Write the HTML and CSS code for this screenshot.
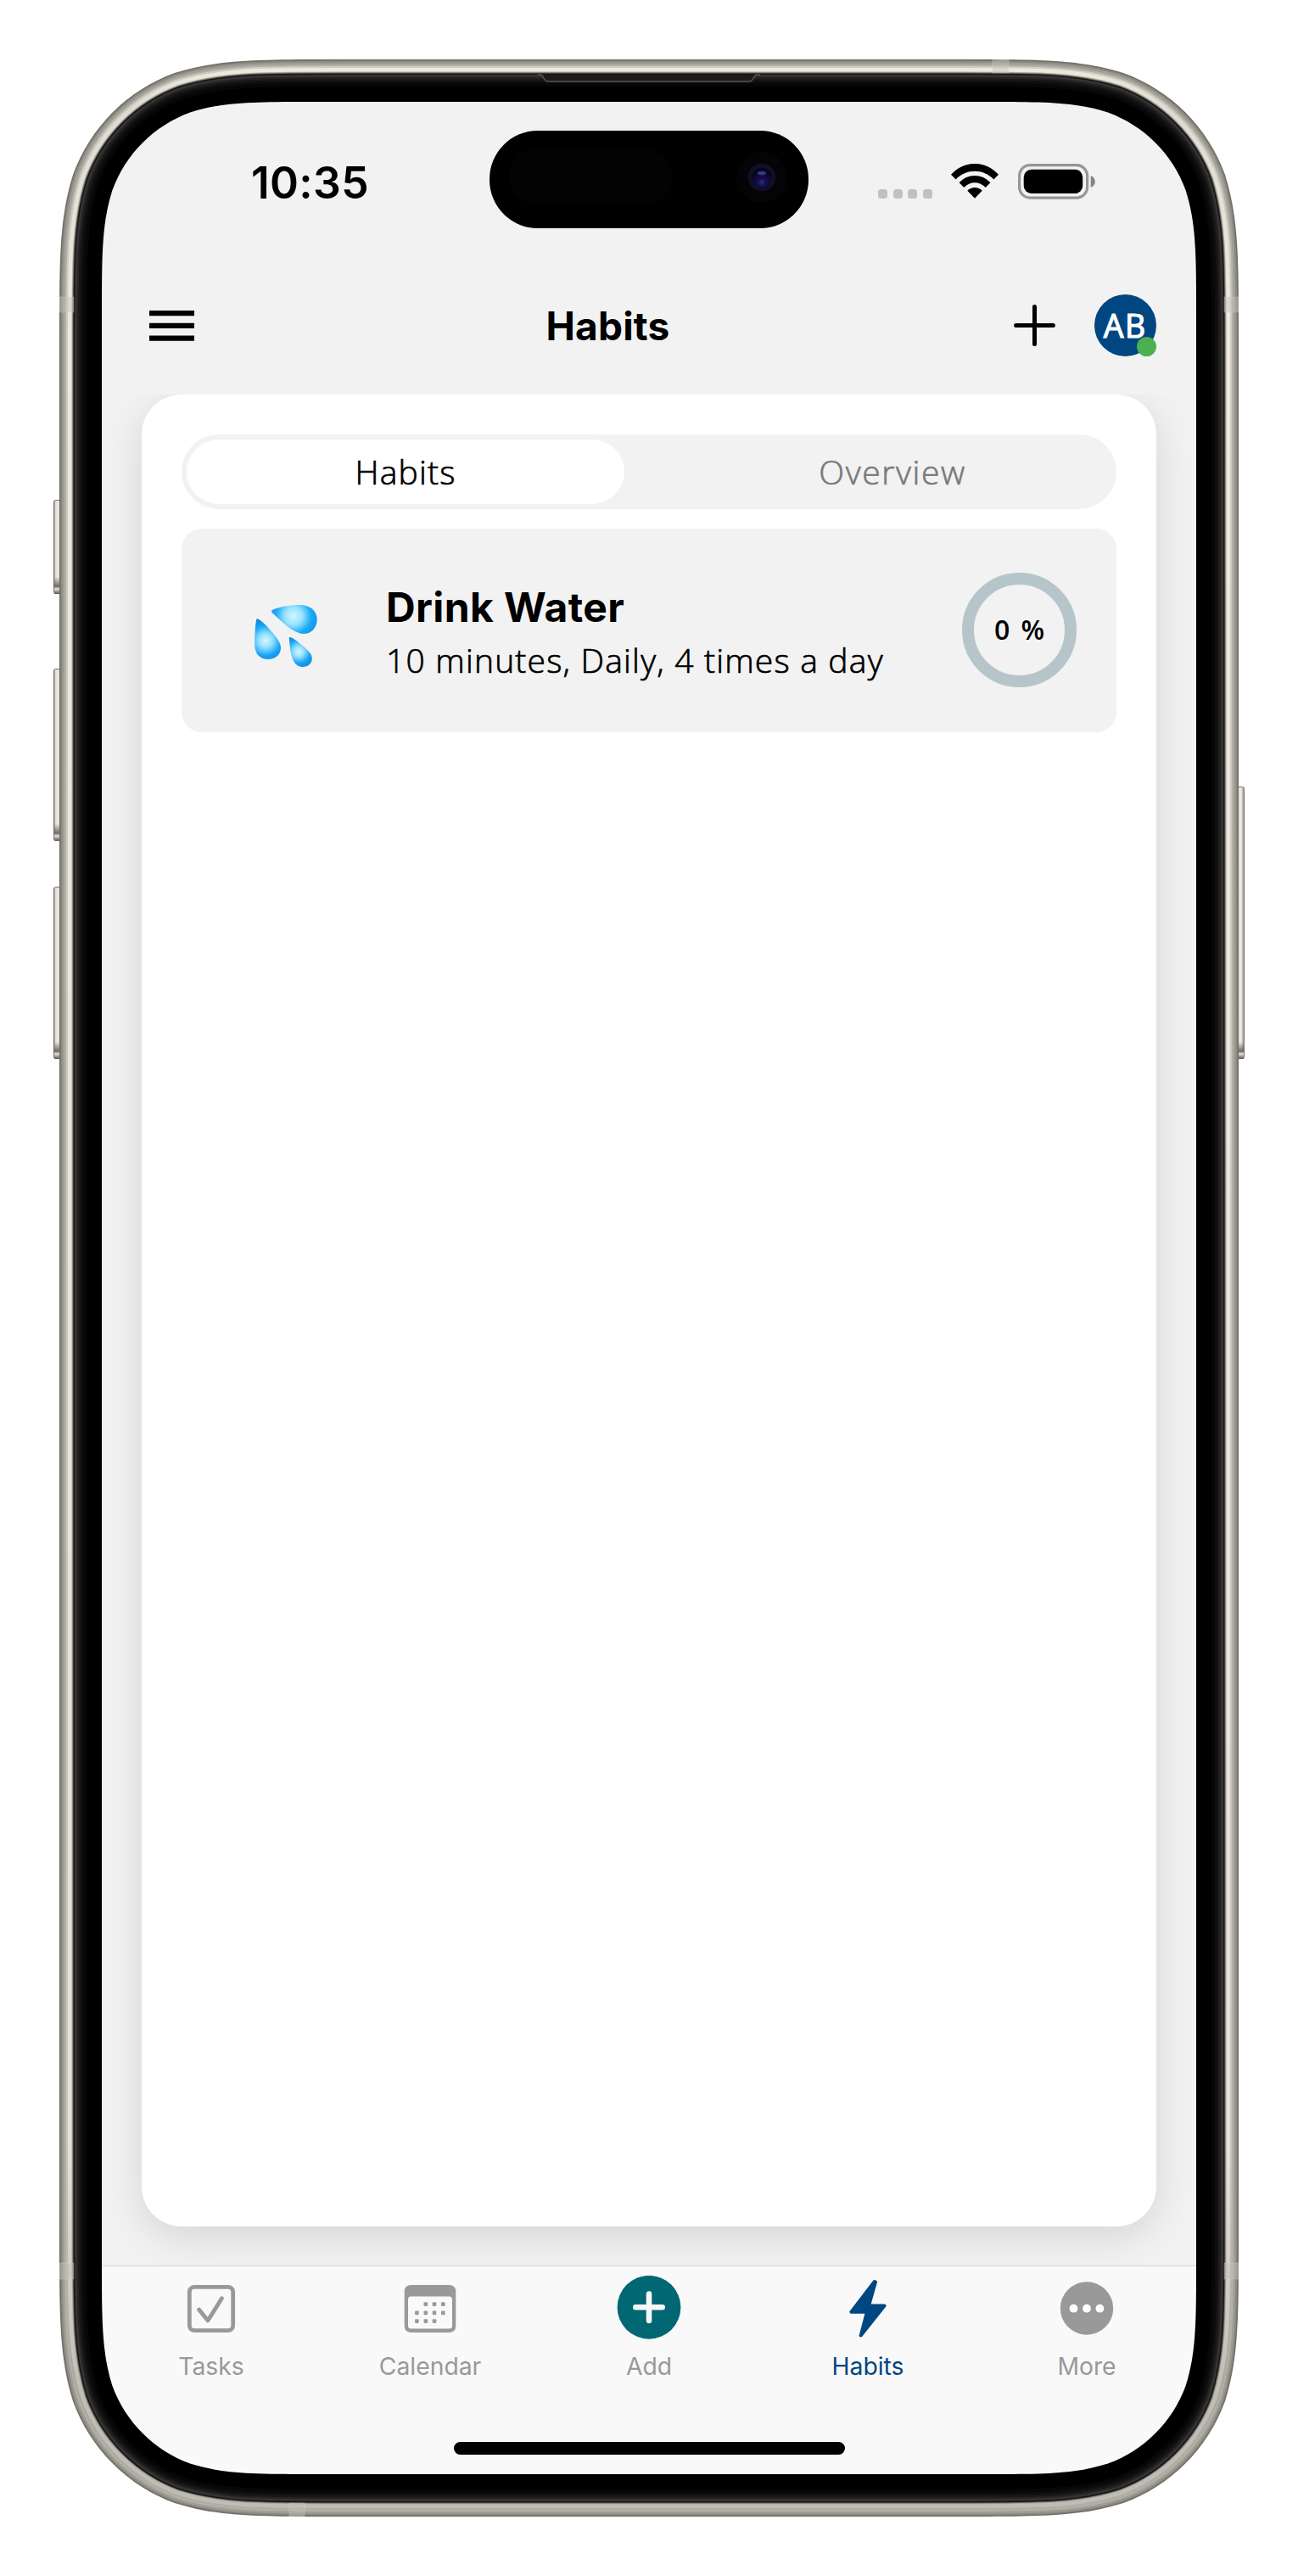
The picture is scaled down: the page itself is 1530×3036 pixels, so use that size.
FILE: index.html
```html
<!DOCTYPE html>
<html lang="en">
<head>
<meta charset="utf-8">
<title>Habits</title>
<link rel="stylesheet" href="styles.css">
</head>
<body>
<div class="device">
  <main class="screen">
    <div class="status">
      <span class="time">10:35</span>
      <div class="island">
        <span class="sensor"></span>
        <svg class="camera" viewBox="0 0 60 60"><defs><radialGradient id="lens" cx=".5" cy=".75" r=".6"><stop offset="0" stop-color="#0a4a55"/><stop offset=".3" stop-color="#1c0c58"/><stop offset="1" stop-color="#04041c"/></radialGradient></defs><circle cx="30" cy="30" r="30" fill="#060307"/><circle cx="30" cy="30" r="16.3" fill="#0f1024"/><circle cx="30" cy="30" r="11.5" fill="url(#lens)"/><ellipse cx="30" cy="25" rx="5" ry="2.3" fill="#343a7c"/></svg>
      </div>
      <div class="indicators">
        <div class="signal"><i></i><i></i><i></i><i></i></div>
        <svg class="wifi" viewBox="0 0 56 41"><path d="M0 12.8C15-4.3 41-4.3 56 12.8L50.3 18.4C38 5.600 18 5.600 5.700 18.4Z"/><path d="M9.600 22.300C19.500 11.100 36.500 11.100 46.400 22.300L40.700 27.900C33.700 20.300 22.300 20.300 15.300 27.900Z"/><path d="M19.300 31.800C24 26.800 32 26.800 36.700 31.800L28 40.700Z"/></svg>
        <svg class="battery" viewBox="0 0 91 42"><rect x="1.600" y="1.600" width="80" height="38.500" rx="12.500" fill="none" stroke="#969696" stroke-width="3.200"/><rect x="6.700" y="6.800" width="69.500" height="28.200" rx="9" fill="#000"/><path d="M85.700 14.200C92.500 16 92.500 26 85.700 27.900Z" fill="#858585"/></svg>
      </div>
    </div>

    <header class="header">
      <svg class="menu" viewBox="0 0 53 36"><path d="M0 3.200H53M0 17.900H53M0 32.600H53" stroke="#000" stroke-width="6.200"/></svg>
      <h1>Habits</h1>
      <div class="actions">
        <svg class="plus" viewBox="0 0 49 49"><path d="M24.500 2.600V46.400M2.600 24.500H46.400" stroke="#000" stroke-width="5" stroke-linecap="round"/></svg>
        <div class="avatar"><span>AB</span><i class="presence"></i></div>
      </div>
    </header>

    <section class="content">
      <div class="panel">
        <nav class="segments">
          <button class="segment segment-on">Habits</button>
          <button class="segment">Overview</button>
        </nav>
        <article class="habit">
          <svg class="drops" viewBox="0 0 74 73">
            <defs>
              <radialGradient id="w1" gradientUnits="userSpaceOnUse" cx="46" cy="13" r="30"><stop offset="0" stop-color="#d2f7ff"/><stop offset=".35" stop-color="#98e3ff"/><stop offset=".68" stop-color="#1fabf8"/><stop offset="1" stop-color="#1294e8"/></radialGradient>
              <radialGradient id="w2" gradientUnits="userSpaceOnUse" cx="13" cy="42" r="26"><stop offset="0" stop-color="#d2f7ff"/><stop offset=".3" stop-color="#98e3ff"/><stop offset=".68" stop-color="#18a4f6"/><stop offset="1" stop-color="#1588d4"/></radialGradient>
              <radialGradient id="w3" gradientUnits="userSpaceOnUse" cx="52" cy="55" r="20"><stop offset="0" stop-color="#d2f7ff"/><stop offset=".3" stop-color="#98e3ff"/><stop offset=".68" stop-color="#18a4f6"/><stop offset="1" stop-color="#1588d4"/></radialGradient>
            </defs>
            <path fill="url(#w1)" d="M20 7.500C20 4.500 38 0 53 0C66 0 73.700 7 73.700 17C73.500 28 66 34 58 34C45 33.500 32 19 21 9.500Z"/>
            <path fill="url(#w2)" d="M2.500 16.500C3 14.500 12 21 18 29C26 38 31 44 31 50.500C31 59 24 64 16 64C6 64 .2 57 .2 47C.2 34 1 21 2.500 16.500Z"/>
            <path fill="url(#w3)" d="M40.800 38.500C41.500 36 50 42 56 47.500C64 54 67.800 58 67.800 63C67.800 69 63 73 57 73C45 73 42 58 40.800 38.500Z"/>
          </svg>
          <div class="habit-text"><h2>Drink Water</h2><p>10 minutes, Daily, 4 times a day</p></div>
          <div class="ring"><span>0 %</span></div>
        </article>
      </div>
    </section>

    <nav class="tabs">
      <a class="tab"><svg viewBox="0 0 76 76"><rect x="12.300" y="13.300" width="51.400" height="51.400" rx="6" fill="none" stroke="#999" stroke-width="4.800"/><path d="M23.600 40L34 53L50.400 26.800" fill="none" stroke="#999" stroke-width="4.800" stroke-linecap="round" stroke-linejoin="round"/></svg><span>Tasks</span></a>
      <a class="tab"><svg viewBox="0 0 76 76"><path fill="#999" fill-rule="evenodd" d="M16 10.900H60Q68.300 10.900 68.300 19V59Q68.300 67 60 67H16Q7.700 67 7.700 59V19Q7.700 10.900 16 10.900ZM15.500 24.500Q12 24.500 12 28V59Q12 62.500 15.500 62.500H60.500Q64 62.500 64 59V28Q64 24.500 60.500 24.500Z"/><g fill="#999"><rect x="30.500" y="31.200" width="4.600" height="4.800" rx="1"/><rect x="40.700" y="31.200" width="4.600" height="4.800" rx="1"/><rect x="51" y="31.200" width="4.600" height="4.800" rx="1"/><rect x="20.100" y="41.500" width="4.600" height="4.800" rx="1"/><rect x="30.500" y="41.500" width="4.600" height="4.800" rx="1"/><rect x="40.700" y="41.500" width="4.600" height="4.800" rx="1"/><rect x="51" y="41.500" width="4.600" height="4.800" rx="1"/><rect x="20.100" y="51.300" width="4.600" height="4.800" rx="1"/><rect x="30.500" y="51.300" width="4.600" height="4.800" rx="1"/><rect x="40.700" y="51.300" width="4.600" height="4.800" rx="1"/></g></svg><span>Calendar</span></a>
      <a class="tab"><svg viewBox="0 0 76 76"><circle cx="38" cy="37.300" r="37.400" fill="#006773"/><path d="M38 21.500V53M22.300 37.300H53.700" stroke="#f7f7f7" stroke-width="6.600" stroke-linecap="round"/></svg><span>Add</span></a>
      <a class="tab tab-on"><svg viewBox="0 0 76 76"><path d="M45.800 7L18.500 42.800H37L29.700 70.500L57.500 35.600H39L47 7.500Z" fill="#004680" stroke="#004680" stroke-width="4" stroke-linejoin="round"/></svg><span>Habits</span></a>
      <a class="tab"><svg viewBox="0 0 76 76"><circle cx="38" cy="38.500" r="31.200" fill="#999"/><g fill="#fff"><circle cx="22.500" cy="38.700" r="4.900"/><circle cx="38" cy="38.700" r="4.900"/><circle cx="53.400" cy="38.700" r="4.900"/></g></svg><span>More</span></a>
      <div class="home"></div>
    </nav>
  </main>

  <svg class="frame" viewBox="0 0 1410 2896">
    <defs>
      <path id="outline" d="M338.700 0H1071.300C1166 0 1213.300 0 1264.200 16.100C1319.800 36.300 1363.700 80.200 1383.900 135.800C1400 186.700 1400 234 1400 328.700V2567.300C1400 2662 1400 2709.300 1383.900 2760.200C1363.700 2815.800 1319.800 2859.700 1264.200 2879.900C1213.300 2896 1166 2896 1071.300 2896H338.700C244 2896 196.700 2896 145.800 2879.900C90.200 2859.700 46.300 2815.800 26.100 2760.200C10 2709.300 10 2662 10 2567.300V328.700C10 234 10 186.700 26.100 135.800C46.300 80.200 90.200 36.300 145.800 16.100C196.700 0 244 0 338.700 0Z"/>
      <path id="opening" d="M312.200 50H1097.800C1170.400 50 1206.700 50 1245.800 62.400C1288.500 77.900 1322.100 111.500 1337.600 154.200C1350 193.300 1350 229.600 1350 302.200V2593.800C1350 2666.400 1350 2702.700 1337.600 2741.800C1322.100 2784.500 1288.500 2818.100 1245.800 2833.600C1206.700 2846 1170.400 2846 1097.800 2846H312.200C239.600 2846 203.300 2846 164.200 2833.600C121.500 2818.100 87.900 2784.500 72.400 2741.800C60 2702.700 60 2666.400 60 2593.800V302.200C60 229.600 60 193.300 72.400 154.200C87.900 111.500 121.500 77.900 164.200 62.400C203.300 50 239.600 50 312.200 50Z"/>
      <mask id="shell" maskUnits="userSpaceOnUse" x="0" y="0" width="1410" height="2896"><use href="#outline" fill="#fff"/><use href="#opening" fill="#000"/></mask>
      <linearGradient id="light" gradientUnits="userSpaceOnUse" x1="0" y1="0" x2="0" y2="2896"><stop offset="0" stop-color="#efece1"/><stop offset=".02" stop-color="#dedbd2"/><stop offset=".1" stop-color="#ebe8de"/><stop offset=".85" stop-color="#e4e1d8"/><stop offset=".95" stop-color="#c0bdb5"/><stop offset="1" stop-color="#bfbcb4"/></linearGradient>
      <linearGradient id="mid" gradientUnits="userSpaceOnUse" x1="0" y1="0" x2="0" y2="2896"><stop offset="0" stop-color="#cfccc2"/><stop offset=".85" stop-color="#c6c3ba"/><stop offset=".95" stop-color="#a9a69d"/><stop offset="1" stop-color="#b0ada4"/></linearGradient>
      <linearGradient id="key" x1="0" x2="1" y1="0" y2="0"><stop offset="0" stop-color="#77746d"/><stop offset=".2" stop-color="#dddad2"/><stop offset=".6" stop-color="#efede6"/><stop offset="1" stop-color="#8f8c84"/></linearGradient>
      <linearGradient id="keyend" x1="0" x2="0" y1="0" y2="1"><stop offset="0" stop-color="#625f58" stop-opacity="0"/><stop offset=".55" stop-color="#625f58" stop-opacity=".9"/><stop offset=".7" stop-color="#e8e5dd"/><stop offset="1" stop-color="#55524b"/></linearGradient>
    </defs>
    <g fill="url(#key)" stroke="#75726b" stroke-width="1"><rect x="3.500" y="519.500" width="9" height="110" rx="2"/><rect x="3.500" y="718.500" width="9" height="202" rx="2"/><rect x="3.500" y="975.500" width="9" height="202" rx="2"/><rect x="1397.500" y="857.500" width="9" height="320" rx="2"/></g>
    <g fill="url(#keyend)"><rect x="4" y="610" width="8" height="20"/><rect x="4" y="901" width="8" height="20"/><rect x="4" y="1158" width="8" height="20"/><rect x="1398" y="1158" width="8" height="20"/></g>
    <g mask="url(#shell)" fill="none">
      <use href="#outline" fill="#000"/>
      <use href="#outline" stroke="#070707" stroke-width="64"/>
      <use href="#outline" stroke="#0e0e0e" stroke-width="56"/>
      <use href="#outline" stroke="#181818" stroke-width="50"/>
      <use href="#outline" stroke="#242424" stroke-width="45"/>
      <use href="#outline" stroke="#343434" stroke-width="41"/>
      <use href="#outline" stroke="#151515" stroke-width="36"/>
      <use href="#outline" stroke="#6a665f" stroke-width="33"/>
      <use href="#outline" stroke="#aaa69c" stroke-width="31"/>
      <use href="#outline" stroke="url(#light)" stroke-width="29"/>
      <use href="#outline" stroke="url(#mid)" stroke-width="20"/>
      <use href="#outline" stroke="#b3b0a7" stroke-width="16"/>
      <use href="#outline" stroke="#a09d94" stroke-width="12"/>
      <use href="#outline" stroke="#8c8980" stroke-width="7"/>
      <use href="#outline" stroke="#716e66" stroke-width="3"/>
      <g fill="#c4c2ba" fill-opacity=".45" stroke="#e0ded7" stroke-opacity=".25"><path d="M10 280H27V298H10ZM1383 280H1400V298H1383ZM1110 0H1129V16H1110ZM281 2880H299V2896H281ZM10 2597H27V2616H10ZM1383 2597H1400V2616H1383Z"/></g>
      <path d="M574 18H577C581 18 580 26 586 26H823C829 26 828 18 832 18H836" fill="#1c1c1c" stroke="#555" stroke-width="1.300"/>
    </g>
  </svg>
</div>
</body>
</html>
```
FILE: styles.css
```css
* { box-sizing: border-box; }
body { margin: 0; width: 1530px; height: 3036px; background: #fff; color: #000; font-family: Inter, sans-serif; }
svg { display: block; }
h1, h2, p { margin: 0; }

.device { display: grid; padding: 70px 60px; }
.device > * { grid-area: 1 / 1; }
.frame { width: 1410px; height: 2896px; pointer-events: none; z-index: 1; }
.screen { width: 1290px; height: 2796px; margin: 50px 60px; border-radius: 150px; overflow: hidden; background: #f2f2f2; display: flex; flex-direction: column; }

.status { height: 182px; display: grid; grid-template-columns: 457px 376px 1fr; padding-top: 34px; }
.time { padding-left: 176px; margin-top: 29px; font-size: 51.500px; line-height: 64px; font-weight: 600; letter-spacing: .3px; }
.island { width: 376px; height: 114.500px; border-radius: 57px; background: #000; display: flex; justify-content: space-between; padding: 22px 25.500px 0 23px; }
.sensor { width: 193px; height: 65px; border-radius: 33px; background: #030303; }
.camera { width: 60px; height: 60px; margin-top: 3px; }
.indicators { display: flex; align-items: flex-start; padding: 39px 0 0 82px; }
.signal { display: flex; gap: 6.600px; margin-top: 30px; }
.signal i { width: 11px; height: 11px; border-radius: 3.500px; background: #c1c1c1; }
.wifi { width: 56px; height: 41px; margin-left: 22.500px; }
.battery { width: 91px; height: 42px; margin-left: 22.500px; }

.header { height: 163px; display: grid; grid-template-columns: 468px auto 1fr; align-items: center; padding: 0 47px 0 55.500px; }
.menu { width: 53px; height: 36px; }
.header h1 { font-size: 46px; line-height: 60px; font-weight: 650; letter-spacing: .2px; }
.actions { display: flex; justify-content: flex-end; align-items: center; gap: 46px; }
.plus { width: 49px; height: 49px; }
.avatar { position: relative; width: 73.500px; height: 73.500px; border-radius: 50%; background: #004680; color: #fff; display: flex; align-items: center; justify-content: center; font: 400 37.500px/40px "Open Sans", sans-serif; letter-spacing: 1.500px; -webkit-text-stroke: 1.200px #fff; }
.presence { position: absolute; right: 0; bottom: 0; width: 23.500px; height: 23.500px; border-radius: 50%; background: #4caf50; }

.content { flex: 1; overflow: hidden; padding: 0 47px 47px; }
.panel { height: 2158.700px; background: #fff; border-radius: 47px; padding: 46.700px 47px; box-shadow: 0 12px 48px rgba(0, 0, 0, .12); }
.segments { height: 88px; border-radius: 44px; background: #f2f2f2; display: grid; grid-template-columns: 516px 516px; gap: 58px; padding: 6px; }
.segment { border: 0; padding: 0; background: none; border-radius: 38px; color: #7a7a7a; font: 300 39px/74px "Open Sans", sans-serif; letter-spacing: 1.600px; -webkit-text-stroke: .7px currentColor; }
.segment-on { background: #fff; color: #000; letter-spacing: 1.200px; }
.habit { height: 240px; margin-top: 23.300px; border-radius: 24px; background: #f2f2f2; display: flex; align-items: center; padding: 0 47px 0 86px; }
.drops { width: 74px; height: 73px; margin-top: 13px; }
.habit-text { flex: 1; margin-left: 81px; padding-top: 8px; }
.habit-text h2 { font-size: 48px; line-height: 62px; font-weight: 700; letter-spacing: .4px; white-space: nowrap; }
.habit-text p { font: 300 39px/62px "Open Sans", sans-serif; letter-spacing: 1.200px; -webkit-text-stroke: .7px currentColor; white-space: nowrap; }
.ring { width: 135px; height: 135px; border: 14.500px solid #b6c5ca; border-radius: 50%; display: flex; align-items: center; justify-content: center; font: 600 32px/40px "Open Sans", sans-serif; word-spacing: 5px; padding-bottom: 2px; }

.tabs { height: 246px; background: #f9f9f9; border-top: 1.500px solid #d5d5d5; display: grid; grid-template-columns: repeat(5, 1fr); grid-template-rows: 207px auto; }
.tab { display: flex; flex-direction: column; align-items: center; padding-top: 11px; color: #999; font-size: 28.300px; line-height: 36px; }
.tab svg { width: 76px; height: 76px; }
.tab span { margin-top: 12.500px; }
.tab-on { color: #004680; }
.home { grid-column: 1 / -1; justify-self: center; width: 461px; height: 14.700px; border-radius: 8px; background: #000; }
```
